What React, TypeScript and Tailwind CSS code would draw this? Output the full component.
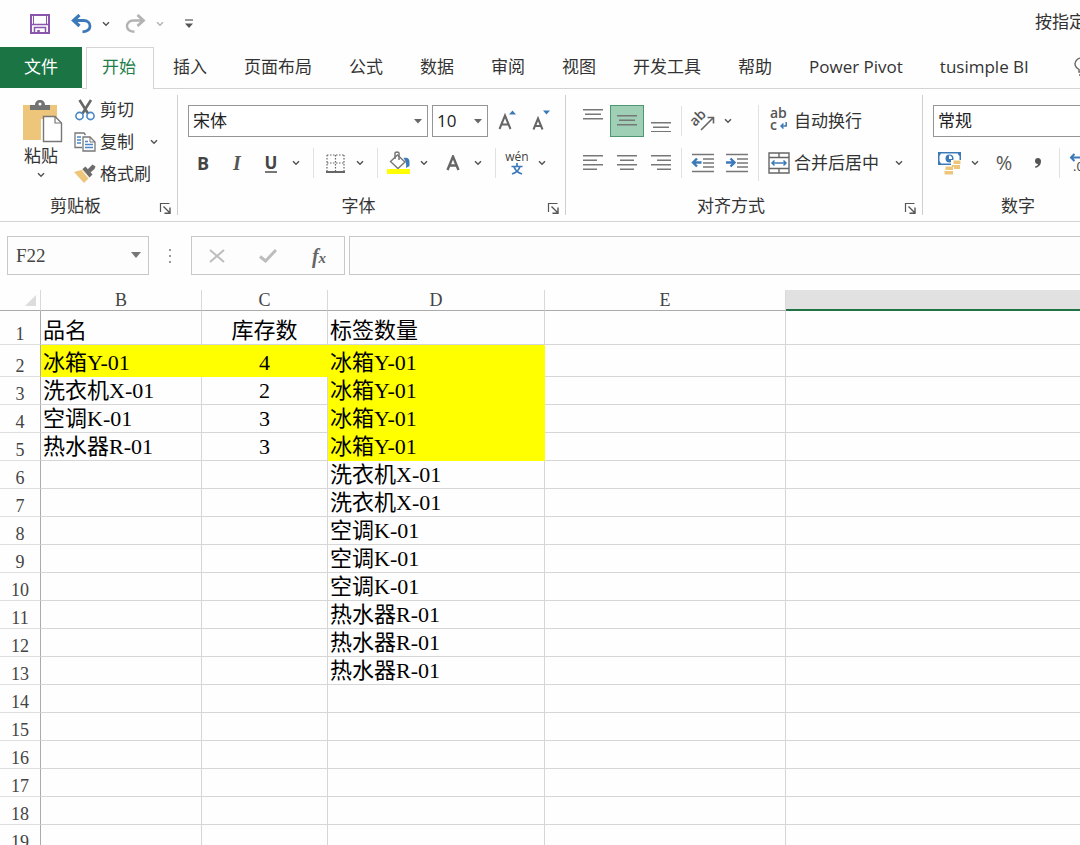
import type { ReactNode } from 'react';
import clsx from 'clsx';

const tabs = ['插入', '页面布局', '公式', '数据', '审阅', '视图', '开发工具', '帮助', 'Power Pivot', 'tusimple BI'];

interface Row {
  b?: string;
  c?: string;
  d?: string;
}

const rows: Row[] = [
  { b: '品名', c: '库存数', d: '标签数量' },
  { b: '冰箱Y-01', c: '4', d: '冰箱Y-01' },
  { b: '洗衣机X-01', c: '2', d: '冰箱Y-01' },
  { b: '空调K-01', c: '3', d: '冰箱Y-01' },
  { b: '热水器R-01', c: '3', d: '冰箱Y-01' },
  { d: '洗衣机X-01' },
  { d: '洗衣机X-01' },
  { d: '空调K-01' },
  { d: '空调K-01' },
  { d: '空调K-01' },
  { d: '热水器R-01' },
  { d: '热水器R-01' },
  { d: '热水器R-01' },
  {},
  {},
  {},
  {},
  {},
  {},
];

function Chevron({ className = 'text-[#555]' }: { className?: string }) {
  return (
    <svg width="8" height="6" viewBox="0 0 8 6" fill="none" className={className}>
      <path d="M1 1.2L4 4.2L7 1.2" stroke="currentColor" strokeWidth="1.5" />
    </svg>
  );
}

function DropButton({ label, className }: { label: string; className?: string }) {
  return (
    <button aria-label={label} className="w-4 h-8 flex items-center justify-center hover:bg-gray-200">
      <Chevron className={className} />
    </button>
  );
}

function IconButton({ label, active, children }: { label: string; active?: boolean; children: ReactNode }) {
  return (
    <button
      aria-label={label}
      className={clsx(
        'w-[34px] h-8 flex items-center justify-center',
        active ? 'bg-[#9fcfb4] border border-[#4d9670]' : 'hover:bg-gray-200'
      )}
    >
      {children}
    </button>
  );
}

function Divider() {
  return <div className="w-px h-[30px] ml-[9px] mr-1 bg-[#e1e1e1]" />;
}

function Launcher({ label }: { label: string }) {
  return (
    <button aria-label={label} className="w-[13px] h-[13px]">
      <svg width="13" height="13" viewBox="0 0 13 13" fill="none" stroke="#555">
        <path d="M1.5 10V1.5H10.5" strokeWidth="1.2" />
        <path d="M4.5 4.5L10.5 10.5M11 5.5V11.2H5.5" strokeWidth="1.4" />
      </svg>
    </button>
  );
}

function Group({ title, launcher = true, className, children }: { title: string; launcher?: boolean; className: string; children: ReactNode }) {
  return (
    <section className={clsx('flex flex-col shrink-0', className)}>
      <div className="h-[107px] flex">{children}</div>
      <div className="h-5 flex items-center">
        <div className="flex-1 text-center pr-2">{title}</div>
        <div className="w-[18px] pt-[6px]">{launcher && <Launcher label={`${title}设置`} />}</div>
      </div>
    </section>
  );
}

function GroupLine() {
  return <div className="w-px my-[6px] bg-[#cfcfcf] shrink-0" />;
}

// Each entry is [x, width]; lines are about 4px apart
function Lines({ lines, top, height = 20 }: { lines: number[][]; top: number; height?: number }) {
  return (
    <svg width="20" height={height} viewBox={`0 0 20 ${height}`} fill="#777">
      {lines.map(([x, w], i) => (
        <rect key={i} x={x} y={top + i * 4.5} width={w} height="1.5" />
      ))}
    </svg>
  );
}

function Indent({ right }: { right?: boolean }) {
  return (
    <svg width="24" height="20" viewBox="0 0 24 20" fill="none">
      <path d="M1 1.5H23M12 6H23M12 10H23M12 14H23M1 18.5H23" stroke="#777" strokeWidth="1.5" />
      <path d={right ? 'M1 9.5H9M5.5 5.5L9.5 9.5L5.5 13.5' : 'M10.5 9.5H2.5M6 5.5L2 9.5L6 13.5'} stroke="#3c79b8" strokeWidth="2.4" />
    </svg>
  );
}

function Combo({ label, value, className }: { label: string; value: string; className: string }) {
  return (
    <div className={clsx('relative h-8', className)}>
      <select
        aria-label={label}
        defaultValue={value}
        className="appearance-none w-full h-full pl-1 pr-4 border border-[#959595] bg-white text-[#222]"
      >
        <option>{value}</option>
      </select>
      <svg width="8" height="5" viewBox="0 0 8 5" className="absolute right-1.5 top-[14px] pointer-events-none">
        <path d="M0 0H8L4 4.5Z" fill="#666" />
      </svg>
    </div>
  );
}

function TitleBar() {
  return (
    <header className="h-[47px] flex items-center pl-[23px]">
      <button aria-label="保存" className="w-[34px] h-8 flex items-center justify-center">
        <svg width="20" height="20" viewBox="0 0 20 20" fill="none" stroke="#8a55ac">
          <path d="M1 1H19V19H1Z" strokeWidth="2" />
          <path d="M3.5 1.500V10.500H16.500V1.500" strokeWidth="1" />
          <path d="M2 10.500H18" strokeWidth="1.500" />
          <path d="M4.500 19V13.500H15.500V19" strokeWidth="1.500" />
          <path d="M8.500 16V19" strokeWidth="2.500" />
        </svg>
      </button>
      <div className="flex ml-[7px]">
        <IconButton label="撤消">
          <svg width="21" height="20" viewBox="0 0 21 20" fill="none" stroke="#3c79b8">
            <path d="M2.5 6.5H12.5C17 6.5 19 9.5 19 12C19 15.5 16 17.5 11.5 17.8" strokeWidth="2.8" />
            <path d="M8.5 1L2.5 6.5L8.5 12" strokeWidth="3.2" />
          </svg>
        </IconButton>
        <DropButton label="撤消选项" />
      </div>
      <div className="flex ml-1">
        <IconButton label="恢复">
          <svg width="21" height="20" viewBox="0 0 21 20" fill="none" stroke="#b3b3b3">
            <path d="M18.5 6.5H8.5C4 6.5 2 9.5 2 12C2 15.5 5 17.5 9.5 17.8" strokeWidth="2.4" />
            <path d="M12.5 1L18.5 6.5L12.5 12" strokeWidth="2.8" />
          </svg>
        </IconButton>
        <DropButton label="恢复选项" className="text-[#b3b3b3]" />
      </div>
      <button aria-label="自定义快速访问工具栏" className="w-8 h-8 ml-[5px] flex items-center justify-center">
        <svg width="8" height="9" viewBox="0 0 8 9">
          <path d="M0 1H8" stroke="#777" strokeWidth="1.5" />
          <path d="M0 4.5H8L4 9Z" fill="#555" />
        </svg>
      </button>
      <h1 className="ml-auto w-[45px] h-6 mb-1 leading-6 overflow-hidden whitespace-nowrap">按指定</h1>
    </header>
  );
}

function Tabs() {
  return (
    <nav className="h-[42px] flex overflow-hidden whitespace-nowrap">
      <a href="#file" className="w-[82px] h-[41px] pb-[2px] bg-[#1b7444] text-white flex items-center justify-center shrink-0">
        文件
      </a>
      <div className="w-1 border-b border-[#d4d4d4] shrink-0" />
      <a href="#home" className="w-[68px] pr-[2px] border border-b-0 border-[#d4d4d4] text-[#1e7e4a] pb-1 flex items-center justify-center shrink-0">
        开始
      </a>
      <div className="flex-1 flex items-center gap-[37px] pl-[19px] pb-[2px] border-b border-[#d4d4d4]">
        {tabs.map((tab) => (
          <a key={tab} href={`#${tab}`} className="shrink-0">
            {tab}
          </a>
        ))}
        <a href="#tell-me" aria-label="告诉我" className="shrink-0 pl-2">
          <svg width="15" height="20" viewBox="0 0 15 20" fill="none" stroke="#666" strokeWidth="1.4">
            <path d="M5 15V12.5C2.5 11 1 9 1 6.8C1 3.5 4 1 7.5 1S14 3.5 14 6.8C14 9 12.5 11 10 12.5V15ZM5 18H10" />
          </svg>
        </a>
      </div>
    </nav>
  );
}

function ClipboardGroup() {
  return (
    <Group title="剪贴板" className="w-[177px]">
      <button className="w-[68px] pl-[14px] pt-[11px] flex flex-col items-center">
        <svg width="40" height="44" viewBox="0 0 40 44" fill="none" className="shrink-0 ml-1">
          <path d="M0 5H34V19H18V40H0Z" fill="#edc67b" />
          <path d="M7 10V5H12C12 2 14 0 17 0S22 2 22 5H27V10Z" fill="#737373" />
          <circle cx="17" cy="4" r="1.5" fill="#fff" />
          <path d="M20.5 16.5H32L38.5 23V41.5H20.5Z" fill="#fff" stroke="#777" strokeWidth="1.4" />
          <path d="M32 16.5V23H38.5" stroke="#777" strokeWidth="1.2" />
        </svg>
        <span className="h-6 leading-6 shrink-0">粘贴</span>
        <span className="pt-1">
          <Chevron />
        </span>
      </button>
      <div className="flex flex-col pl-[6px] pt-[5px]">
        <button className="h-8 shrink-0 flex items-center gap-1">
          <svg width="22" height="22" viewBox="0 0 22 22" fill="none">
            <path d="M5.5 1L14 14.5M17 1L8.5 14.5" stroke="#666" strokeWidth="2.6" />
            <circle cx="5.5" cy="17" r="3.6" stroke="#4a86c5" strokeWidth="1.6" />
            <circle cx="16.5" cy="17" r="3.6" stroke="#4a86c5" strokeWidth="1.6" />
          </svg>
          剪切
        </button>
        <div className="h-8 shrink-0 flex items-center">
          <button className="flex items-center gap-1">
            <svg width="22" height="20" viewBox="0 0 22 20" fill="none">
              <path d="M8 15.5H1V1H10L11.5 3" stroke="#777" strokeWidth="1.3" />
              <path d="M3 5H7M3 8H7M3 11H7" stroke="#4a86c5" strokeWidth="1.4" />
              <path d="M9 5H16L21 10V19H9Z" fill="#fff" stroke="#777" strokeWidth="1.3" />
              <path d="M16 5V10H21" stroke="#777" />
              <path d="M11 9.5H14M11 12.5H19M11 15.5H19" stroke="#4a86c5" strokeWidth="1.5" />
            </svg>
            复制
          </button>
          <span className="pl-3">
            <DropButton label="复制选项" />
          </span>
        </div>
        <button className="h-8 shrink-0 flex items-center gap-1">
          <svg width="22" height="20" viewBox="0 0 22 20">
            <path d="M0 8L9 5.5L15 14L10 19Z" fill="#edc67b" />
            <path d="M8.5 5L11.5 2.5L18.5 10.5L15.5 13.5Z" fill="#6b6b6b" />
            <path d="M13.5 5.5L18.5 0.5L21.5 2.5L20.5 5L16.5 8.5Z" fill="#6b6b6b" />
            <path d="M8 6.5L15 14.5" stroke="#fff" />
          </svg>
          格式刷
        </button>
      </div>
    </Group>
  );
}

function FontGroup() {
  return (
    <Group title="字体" className="w-[387px]">
      <div className="pt-4 flex flex-col gap-[10px]">
        <div className="flex pl-[10px]">
          <Combo label="字体名称" value="宋体" className="w-60" />
          <Combo label="字号" value="10" className="w-14 ml-1" />
          <span className="flex pl-[2px]">
            <IconButton label="增大字号">
              <svg width="20" height="22" viewBox="0 0 20 22" fill="none">
                <path d="M2.5 19L8 5.5L13.5 19M4.5 14.5H11.5" stroke="#666" strokeWidth="2" />
                <path d="M12 4.5L15.5 0.5L19 4.5Z" fill="#3c79b8" />
              </svg>
            </IconButton>
            <IconButton label="减小字号">
              <svg width="20" height="22" viewBox="0 0 20 22" fill="none">
                <path d="M2.5 19.5L7 8.5L11.5 19.5M4 16H10" stroke="#666" strokeWidth="2" />
                <path d="M12 0.5H19L15.5 4.5Z" fill="#3c79b8" />
              </svg>
            </IconButton>
          </span>
        </div>
        <div className="flex items-center pl-2">
          <IconButton label="加粗">
            <span className="font-bold text-[18px] text-[#444]">B</span>
          </IconButton>
          <IconButton label="倾斜">
            <span className="font-['Liberation_Serif'] font-bold italic text-[20px] text-[#555]">I</span>
          </IconButton>
          <IconButton label="下划线">
            <span className="font-bold text-[17px] leading-[17px] text-[#444] border-b-2 border-[#777]">U</span>
          </IconButton>
          <DropButton label="下划线选项" />
          <Divider />
          <IconButton label="边框">
            <svg width="19" height="19" viewBox="0 0 19 19" fill="none" stroke="#666">
              <path d="M1 1H18M1 9H18M1 1V17M9.5 1V17M18 1V17" strokeWidth="1.2" strokeDasharray="1.5 1.5" />
              <path d="M0 18H19" strokeWidth="2" />
            </svg>
          </IconButton>
          <DropButton label="边框选项" />
          <Divider />
          <IconButton label="填充颜色">
            <svg width="24" height="24" viewBox="0 0 24 24" fill="none">
              <path d="M10.5 4L18 11L11 17.5L3.5 10.5Z" fill="#fff" stroke="#777" strokeWidth="1.4" />
              <path d="M8 8V2C8 0.8 12 0.8 12 2V9" stroke="#777" strokeWidth="1.5" />
              <path d="M16.5 7C21 6 22.5 8 22.5 11V15L19 17C19.5 13 19 10 16.5 7Z" fill="#3c79b8" />
              <path d="M0 18H23V23H0Z" fill="#ffff00" />
            </svg>
          </IconButton>
          <DropButton label="填充颜色选项" />
          <div className="flex ml-1">
            <IconButton label="字体颜色">
              <svg width="14" height="16" viewBox="0 0 14 16" fill="none">
                <path d="M1.5 15L7 1.5L12.5 15M3.5 10.5H10.5" stroke="#666" strokeWidth="2.4" />
              </svg>
            </IconButton>
            <DropButton label="字体颜色选项" />
          </div>
          <Divider />
          <IconButton label="拼音">
            <span className="flex flex-col items-center">
              <span className="text-[12px] leading-3 text-[#444]">wén</span>
              <svg width="12" height="12" viewBox="0 0 12 12" fill="none" stroke="#3c79b8" strokeWidth="1.7">
                <path d="M6 0V3M0.5 3.5H11.5M3 3.5C4 7 6.500 9.500 11 11M9 3.5C8 7 5.500 9.500 1 11" />
              </svg>
            </span>
          </IconButton>
          <DropButton label="拼音选项" />
        </div>
      </div>
    </Group>
  );
}

function AlignGroup() {
  return (
    <Group title="对齐方式" className="w-[356px]">
      <div className="pt-4 pl-[10px] flex flex-col gap-[10px]">
        <div className="flex items-center">
          <IconButton label="顶端对齐">
            <Lines lines={[[0, 20], [2, 16], [0, 20]]} top={0} height={24} />
          </IconButton>
          <IconButton label="垂直居中" active>
            <Lines lines={[[0, 20], [2, 16], [0, 20]]} top={4} />
          </IconButton>
          <IconButton label="底端对齐">
            <Lines lines={[[0, 20], [2, 16], [0, 20]]} top={12} height={22} />
          </IconButton>
          <div className="w-px h-[30px] ml-[3px] mr-1 bg-[#e1e1e1]" />
          <IconButton label="方向">
            <svg width="28" height="24" viewBox="0 0 28 24" fill="none">
              <text x="6" y="18" transform="rotate(-45 6 18)" fontSize="14" fontWeight="600" fill="#555">
                ab
              </text>
              <path d="M12 21L24 9M18.5 8.5H24.5V14.5" stroke="#666" strokeWidth="1.6" />
            </svg>
          </IconButton>
          <DropButton label="方向选项" />
        </div>
        <div className="flex items-center">
          <IconButton label="左对齐">
            <Lines lines={[[0, 20], [0, 14], [0, 20], [0, 14]]} top={2} />
          </IconButton>
          <IconButton label="居中">
            <Lines lines={[[0, 20], [3, 14], [0, 20], [3, 14]]} top={2} />
          </IconButton>
          <IconButton label="右对齐">
            <Lines lines={[[0, 20], [6, 14], [0, 20], [6, 14]]} top={2} />
          </IconButton>
          <div className="w-px h-[30px] ml-[3px] mr-1 bg-[#e1e1e1]" />
          <IconButton label="减少缩进量">
            <Indent />
          </IconButton>
          <IconButton label="增加缩进量">
            <Indent right />
          </IconButton>
        </div>
      </div>
      <div className="w-px h-[76px] mt-4 ml-1 bg-[#e1e1e1] shrink-0" />
      <div className="pt-4 pl-[9px] flex flex-col gap-[10px]">
        <button className="h-8 flex items-center gap-1">
          <span className="w-[22px] pb-1 flex flex-col items-start pl-[2px] text-[14px] font-semibold text-[#555]">
            <span className="leading-3">ab</span>
            <span className="leading-3 flex items-center gap-[3px]">
              c
              <svg width="7" height="7" viewBox="0 0 7 7" fill="none" stroke="#3c79b8" strokeWidth="1.5">
                <path d="M6.2 0V4H1M3.5 1.5L1 4L3.5 6.5" />
              </svg>
            </span>
          </span>
          自动换行
        </button>
        <div className="h-8 flex items-center">
          <button className="h-8 flex items-center gap-1">
            <svg width="22" height="22" viewBox="0 0 22 22" fill="none">
              <path d="M1 1H21V21H1ZM1 5.5H21M1 16.5H21M11 1V5.5M11 16.5V21" stroke="#666" strokeWidth="1.4" />
              <path d="M4 11H18M6.5 8.5L4 11L6.5 13.5M15.5 8.5L18 11L15.5 13.5" stroke="#3c79b8" strokeWidth="1.5" />
            </svg>
            合并后居中
          </button>
          <span className="pl-3">
            <DropButton label="合并选项" />
          </span>
        </div>
      </div>
    </Group>
  );
}

function NumberGroup() {
  return (
    <Group title="数字" launcher={false} className="w-[216px]">
      <div className="pt-4 pl-[10px] flex flex-col gap-[10px]">
        <Combo label="数字格式" value="常规" className="w-[184px]" />
        <div className="flex items-center">
          <IconButton label="会计数字格式">
            <svg width="24" height="24" viewBox="0 0 24 24">
              <path d="M0 1H23V14H0Z" fill="#3c79b8" />
              <path d="M3 2.5H20V3.5L21.5 5V10L20 12.5H3L1.5 10V5Z" fill="#fff" />
              <circle cx="11.5" cy="7.5" r="4" fill="#3c79b8" />
              <path d="M11 4.5C13.5 4.5 14 6 14 8H11Z" fill="#fff" />
              <path d="M13 9H24V19H17V24H6V15H13Z" fill="#fff" />
              <path d="M15.5 9.5H22.5V13H15.5ZM14 14H22V18H16V16H14ZM7.5 15.5H15V19H7.5ZM6.5 20H15V23.5H6.5Z" fill="#edc67b" />
            </svg>
          </IconButton>
          <DropButton label="货币选项" />
          <div className="flex ml-1">
            <IconButton label="百分比">
              <span className="text-[20px] text-[#555]">%</span>
            </IconButton>
            <IconButton label="千位分隔">
              <svg width="8" height="10" viewBox="0 0 8 10">
                <path d="M4 0C6 0 7 1.5 7 3.5C7 6.5 5 9 1.5 10L1 8.5C3 8 4 7 4 6C2 6 1 5 1 3S2 0 4 0Z" fill="#555" />
              </svg>
            </IconButton>
          </div>
          <div className="w-px h-[30px] ml-1 mr-[10px] bg-[#e1e1e1]" />
          <button aria-label="增加小数位数" className="h-8">
            <svg width="26" height="20" viewBox="0 0 26 20" fill="none">
              <path d="M1 4.5H10M4.5 1L1 4.5L4.5 8" stroke="#3c79b8" strokeWidth="2" />
              <text x="3" y="18" fontSize="13" fill="#444">
                .00
              </text>
            </svg>
          </button>
        </div>
      </div>
    </Group>
  );
}

function FormulaBar() {
  return (
    <div className="h-[68px] pl-[7px] pt-[14px] flex items-start">
      <div className="relative w-[142px] h-[39px] shrink-0">
        <input
          aria-label="名称框"
          defaultValue="F22"
          className="w-full h-full pl-2 border border-[#c8c8c8] bg-[#fdfdfd] font-['Liberation_Serif'] text-[19px] text-[#444]"
        />
        <svg width="10" height="6" viewBox="0 0 10 6" className="absolute right-2 top-4 pointer-events-none">
          <path d="M0 0H10L5 6Z" fill="#777" />
        </svg>
      </div>
      <svg width="42" height="39" viewBox="0 0 42 39" fill="#999" className="shrink-0">
        <path d="M20 13H22V15H20ZM20 19H22V21H20ZM20 25H22V27H20Z" />
      </svg>
      <div className="w-[154px] h-[39px] px-2 border border-[#c8c8c8] bg-[#fdfdfd] flex items-center justify-between shrink-0">
        <button aria-label="取消" className="w-[34px] h-8 flex items-center justify-center">
          <svg width="16" height="14" viewBox="0 0 16 14" fill="none" stroke="#bdbdbd" strokeWidth="2">
            <path d="M1 1L15 13M15 1L1 13" />
          </svg>
        </button>
        <button aria-label="输入" className="w-[34px] h-8 flex items-center justify-center">
          <svg width="18" height="14" viewBox="0 0 18 14" fill="none" stroke="#bdbdbd" strokeWidth="3">
            <path d="M1 7.5L6.5 12L17 1" />
          </svg>
        </button>
        <button aria-label="插入函数" className="w-[34px] h-8 font-['Liberation_Serif'] font-bold italic text-[20px] text-[#666]">
          f<span className="text-[15px]">x</span>
        </button>
      </div>
      <input aria-label="编辑栏" className="ml-1 flex-1 min-w-0 h-[39px] px-2 border border-r-0 border-[#c8c8c8] bg-[#fdfdfd]" />
    </div>
  );
}

function Sheet() {
  const line = 'border-r border-b';
  const head = 'h-[21px] p-0 border-r border-b border-r-[#d9d9d9] border-b-[#ababab] font-normal text-[18px] leading-5';

  return (
    <table className="w-full table-fixed border-separate border-spacing-0 font-['Liberation_Serif','Noto_Sans_CJK_SC',serif] text-[22px] leading-[27px] text-black">
      <colgroup>
        <col className="w-[41px]" />
        <col className="w-[161px]" />
        <col className="w-[126px]" />
        <col className="w-[217px]" />
        <col className="w-[241px]" />
        <col />
      </colgroup>
      <thead>
        <tr className="text-[#444]">
          <th className={head} aria-label="全选">
            <svg width="11" height="11" viewBox="0 0 11 11" className="ml-auto mr-1">
              <path d="M11 0V11H0Z" fill="#dcdcdc" />
            </svg>
          </th>
          <th className={head}>B</th>
          <th className={head}>C</th>
          <th className={head}>D</th>
          <th className={head}>E</th>
          <th className="p-0 bg-[#e1e1e1] border-b-2 border-[#217346]" aria-label="F" />
        </tr>
      </thead>
      <tbody>
        {rows.map((row, i) => {
          const height = i === 0 ? 'h-[34px]' : i === 1 ? 'h-8' : 'h-7';
          const plain = 'border-[#d6d6d6]';
          const yellow = 'bg-[#ffff00] border-[#ffff00]';
          const stock = i === 1 ? yellow : plain;
          return (
            <tr key={i} className="align-bottom whitespace-nowrap">
              <th className={clsx(height, 'p-0 border-r border-b border-r-[#ababab] border-b-[#dedede] font-normal text-[18px] leading-5 text-[#444]')}>
                {i + 1}
              </th>
              <td className={clsx('p-0 pl-[2px]', line, stock)}>{row.b}</td>
              <td className={clsx('p-0 text-center', line, stock)}>{row.c}</td>
              <td className={clsx('p-0 pl-[2px]', line, i >= 1 && i <= 4 ? yellow : plain)}>{row.d}</td>
              <td className={clsx('p-0', line, plain)} />
              <td className="p-0 border-b border-[#d6d6d6]" />
            </tr>
          );
        })}
      </tbody>
    </table>
  );
}

export default function App() {
  return (
    <div className="h-screen flex flex-col overflow-hidden bg-[#fefefe] text-[17px] text-[#333] font-['Open_Sans','Noto_Sans_CJK_SC',sans-serif]">
      <TitleBar />
      <Tabs />
      <div className="h-[133px] flex border-b border-[#d4d4d4] shrink-0 overflow-hidden">
        <ClipboardGroup />
        <GroupLine />
        <FontGroup />
        <GroupLine />
        <AlignGroup />
        <GroupLine />
        <NumberGroup />
      </div>
      <FormulaBar />
      <main className="flex-1 min-h-0 overflow-hidden">
        <Sheet />
      </main>
    </div>
  );
}
